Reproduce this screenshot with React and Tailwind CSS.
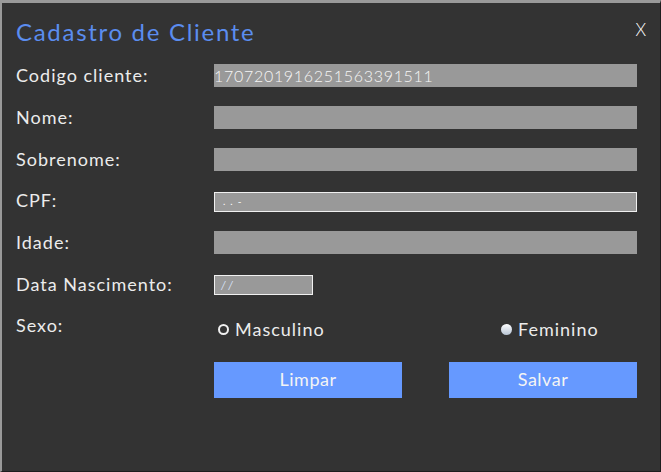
import { useState } from 'react';

const fields = [
  { label: 'Codigo cliente:', value: '1707201916251563391511' },
  { label: 'Nome:', value: '' },
  { label: 'Sobrenome:', value: '' },
];

const Row = ({ label, children }) => (
  <div className="flex items-center h-[41.7px]">
    <span className="w-[198px] shrink-0 text-[18px] tracking-[1px] text-[#ececec]">{label}</span>
    {children}
  </div>
);

const Radio = ({ checked, label, onClick, className = '' }) => (
  <button onClick={onClick} className={`flex items-center gap-[6px] text-[18px] tracking-[1px] text-[#ececec] ${className}`}>
    {checked ? (
      <span className="w-[11px] h-[11px] rounded-full border-[2px] border-[#f0f0f0] bg-[#333]" />
    ) : (
      <span className="w-[11px] h-[11px] rounded-full bg-gradient-to-b from-white to-[#b8c4d4]" />
    )}
    {label}
  </button>
);

export default function App() {
  const [sexo, setSexo] = useState('M');

  return (
    <div
      className="relative w-[661px] h-[472px] bg-[#333333] border-t-[3px] border-l-[2px] border-r border-b border-t-[#9a9a9a] border-l-[#9a9a9a] border-r-[#1e1e1e] border-b-[#1e1e1e] overflow-hidden"
      style={{ fontFamily: 'Lato, "Open Sans", sans-serif' }}
    >
      <div className="absolute top-[-3px] left-0 w-[125px] h-[2px] bg-[#5b8def]" />

      {/* HEADER */}
      <div className="flex items-start justify-between pl-[14px] pr-[14px] pt-[15px]">
        <h1 className="text-[24px] tracking-[1.7px] text-[#5b8def] leading-[28px]">Cadastro de Cliente</h1>
        <button className="text-[17px] text-white leading-[20px] mt-[2px] font-light">X</button>
      </div>

      {/* FORM */}
      <div className="pl-[14px] pr-[23px] pt-[9px]">
        {fields.map((f) => (
          <Row key={f.label} label={f.label}>
            <div className="flex-1 h-[23px] bg-[#999999] text-[16px] font-light tracking-[0.7px] leading-[23px] text-[#f6f6f6]">
              {f.value}
            </div>
          </Row>
        ))}

        <Row label="CPF:">
          <div className="flex-1 h-[20px] mt-[2px] bg-[#999999] border border-[#f0f0f0] text-[10px] leading-[16px] text-white pl-[8px] tracking-[5px]">
            ..-
          </div>
        </Row>

        <Row label="Idade:">
          <div className="flex-1 h-[23px] bg-[#999999]" />
        </Row>

        <Row label="Data Nascimento:">
          <div className="w-[99px] h-[20px] mt-[2px] bg-[#999999] border border-[#f0f0f0] text-[11px] leading-[17px] text-[#dde6ff] italic pl-[6px]">
            / /
          </div>
        </Row>

        <Row label="Sexo:">
          <div className="flex-1 flex items-center pl-[4px] mt-[8px]">
            <Radio className="w-[283px]" checked={sexo === 'M'} label="Masculino" onClick={() => setSexo('M')} />
            <Radio checked={sexo === 'F'} label="Feminino" onClick={() => setSexo('F')} />
          </div>
        </Row>

        {/* ACTIONS */}
        <div className="flex justify-between ml-[198px] mt-[15px]">
          <button className="w-[188px] h-[36px] bg-[#6699ff] text-[18px] tracking-[0.5px] text-[#f4f4f4]">Limpar</button>
          <button className="w-[188px] h-[36px] bg-[#6699ff] text-[18px] tracking-[0.5px] text-[#f4f4f4]">Salvar</button>
        </div>
      </div>
    </div>
  );
}
